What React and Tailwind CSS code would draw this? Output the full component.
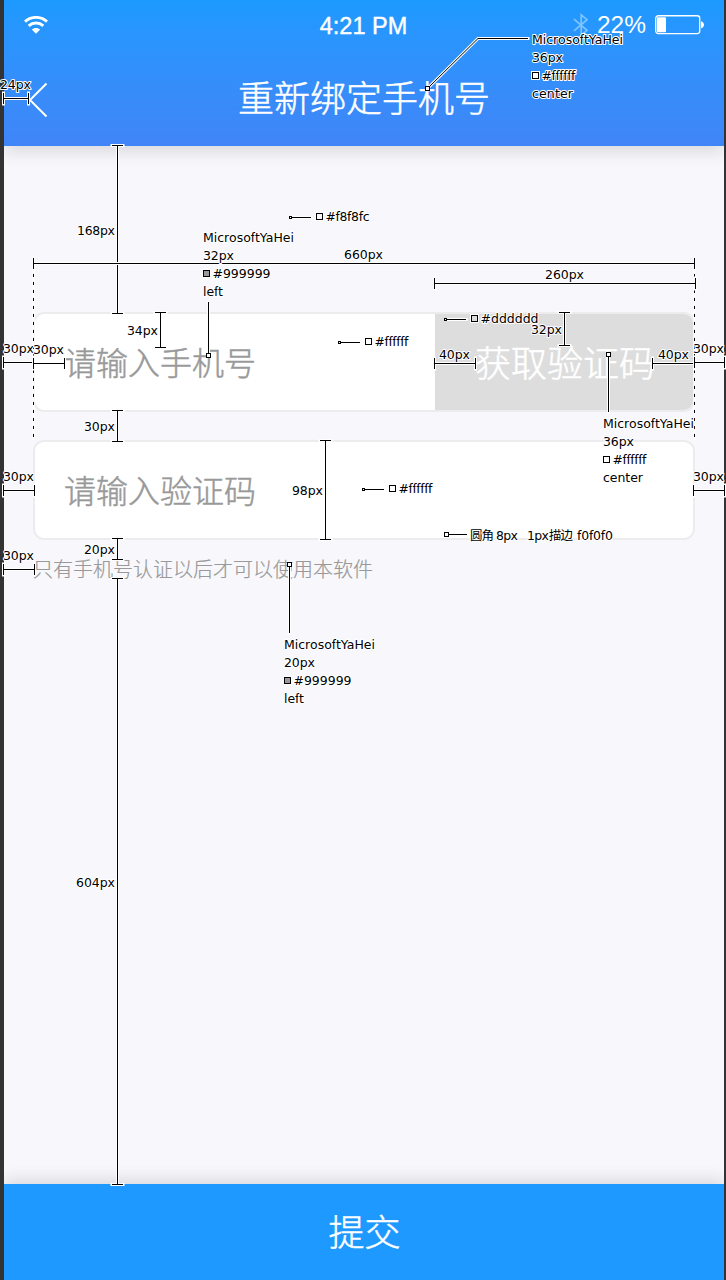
const rulers = [
  // [orientation, fixed, from, to]
  ["h", 98.5, 3.5, 28.5],
  ["v", 117.5, 145.5, 313.5],
  ["h", 263.5, 33.5, 694.5],
  ["h", 283.5, 434.5, 695.5],
  ["v", 160.5, 312.5, 347.5],
  ["h", 362.5, 3.5, 33.5],
  ["h", 363.5, 33.5, 64.5],
  ["v", 564.5, 312.5, 345.5],
  ["h", 363.5, 434.5, 475.5],
  ["h", 363.5, 652.5, 694.5],
  ["h", 362.5, 694.5, 724.5],
  ["v", 117.5, 410.5, 441.5],
  ["v", 325.5, 440.5, 539.5],
  ["h", 490.5, 3.5, 34.5],
  ["h", 490.5, 693.5, 724.5],
  ["v", 117.5, 538.5, 559.5],
  ["h", 569.5, 3.5, 34.5],
  ["v", 117.5, 578.5, 1184.5],
];

const labels = [
  // [text, x, baseline, width]
  ["24px", 0, 89, 31],
  ["168px", 77, 235, 38],
  ["660px", 344, 259, 39],
  ["260px", 545, 279, 39],
  ["34px", 127, 335, 31],
  ["30px", 3, 353, 31],
  ["30px", 33, 354, 31],
  ["32px", 531, 334, 31],
  ["40px", 439, 359, 31],
  ["40px", 658, 359, 31],
  ["30px", 693, 353, 31],
  ["30px", 84, 431, 31],
  ["98px", 292, 495, 31],
  ["30px", 3, 481, 31],
  ["30px", 693, 481, 31],
  ["20px", 84, 554, 31],
  ["30px", 3, 560, 31],
  ["604px", 76, 887, 39],
  ["#f8f8fc", 325.5, 221, 44],
  ["#ffffff", 374.5, 346, 34],
  ["#dddddd", 480.5, 323, 58],
  ["#ffffff", 398.5, 493, 34],
  ["8px", 496, 540, 22],
  ["1px", 527, 540, 22],
  ["f0f0f0", 577, 540, 36],
  ["圆角", 470, 540, 24],
  ["描边", 549, 540, 24],
];

const specs = [
  { x: 532, y: 44, size: "36px", color: "#ffffff", w: 34, align: "center", aw: 41, fill: "#fff" },
  { x: 203, y: 242, size: "32px", color: "#999999", w: 58, align: "left", aw: 20, fill: "#999999" },
  { x: 603, y: 428, size: "36px", color: "#ffffff", w: 34, align: "center", aw: 40, fill: "#fff" },
  { x: 284, y: 649, size: "20px", color: "#999999", w: 58, align: "left", aw: 20, fill: "#999999" },
];

const leaders = [
  { d: "M427.5 88.5L478 38.5H528", x: 425.5, y: 86.5, s: 4 },
  { d: "M208.5 302V355", x: 206.5, y: 353.5, s: 4 },
  { d: "M608.5 354V412", x: 606.5, y: 352.5, s: 4 },
  { d: "M289.5 564V633", x: 287.5, y: 562.5, s: 4 },
  { d: "M447 534.5H467", x: 444.5, y: 532.5, s: 4 },
  { d: "M291 217.5H311", x: 289.5, y: 216.5, s: 2 },
  { d: "M340 342.5H360", x: 338.5, y: 341.5, s: 2 },
  { d: "M446 319.5H466", x: 444.5, y: 318.5, s: 2 },
  { d: "M364 489.5H384", x: 362.5, y: 488.5, s: 2 },
];

const swatches = [
  [316.5, 213.5, "#f8f8fc"],
  [365.5, 338.5, "#ffffff"],
  [471.5, 315.5, "#dddddd"],
  [389.5, 485.5, "#ffffff"],
];

function rulerPath([dir, c, a, b]) {
  return dir === "h"
    ? `M${a} ${c}H${b}M${a} ${c - 5.5}v11M${b} ${c - 5.5}v11`
    : `M${c} ${a}V${b}M${c - 5.5} ${a}h11M${c - 5.5} ${b}h11`;
}

function Outlined({ d }) {
  return (
    <g fill="none">
      <path d={d} stroke="#fff" strokeWidth="3" strokeLinecap="square" />
      <path d={d} stroke="#000" />
    </g>
  );
}

function Note({ x, y, w, children }) {
  return (
    <text x={x} y={y} textLength={w} stroke="#fff" strokeWidth="2" strokeLinejoin="round" className="[paint-order:stroke]">
      {children}
    </text>
  );
}

function Swatch({ x, y, fill }) {
  return (
    <g>
      <rect x={x - 1} y={y - 1} width="8" height="8" fill="none" stroke="#fff" />
      <rect x={x} y={y} width="6" height="6" fill={fill} stroke="#000" />
    </g>
  );
}

function Annotations() {
  return (
    <svg
      width="726"
      height="1280"
      viewBox="0 0 726 1280"
      className="pointer-events-none absolute top-0 left-0 text-[12.5px] [font-variant-ligatures:none] [font-family:'DejaVu_Sans','Noto_Sans_CJK_SC',sans-serif]"
    >
      <path d="M33.5 266V440M694.5 266V440" stroke="#fff" strokeWidth="3" opacity="0.6" />
      <path d="M33.5 266V440M694.5 266V440" stroke="#000" strokeDasharray="3 5" />
      {rulers.map((r, i) => <Outlined key={i} d={rulerPath(r)} />)}
      {leaders.map((l, i) => (
        <g key={i}>
          <Outlined d={l.d} />
          <rect x={l.x} y={l.y} width={l.s} height={l.s} fill="#fff" stroke="#000" />
        </g>
      ))}
      {swatches.map(([x, y, f], i) => <Swatch key={i} x={x} y={y} fill={f} />)}
      {labels.map(([t, x, y, w], i) => <Note key={i} x={x} y={y} w={w}>{t}</Note>)}
      {specs.map((s, i) => (
        <g key={i}>
          <Note x={s.x} y={s.y} w={91}>MicrosoftYaHei</Note>
          <Note x={s.x} y={s.y + 18} w={31}>{s.size}</Note>
          <Swatch x={s.x + 0.5} y={s.y + 28.5} fill={s.fill} />
          <Note x={s.x + 9.5} y={s.y + 36} w={s.w}>{s.color}</Note>
          <Note x={s.x} y={s.y + 54} w={s.aw}>{s.align}</Note>
        </g>
      ))}
    </svg>
  );
}

function WifiIcon() {
  return (
    <svg width="24" height="18" viewBox="0 0 24 18" fill="none" stroke="#fff" strokeWidth="2.9">
      <path d="M1 5.6C7.2 0 16.8 0 23 5.6" />
      <path d="M4.7 9.8c4.2-3.7 10.4-3.7 14.6 0" />
      <path d="M7.8 13.600c2.5-2.2 5.9-2.2 8.4 0L12 17.800z" fill="#fff" stroke="none" />
    </svg>
  );
}

function BluetoothIcon() {
  return (
    <svg width="16" height="24" viewBox="0 0 16 24" fill="none" stroke="#7fc3ff" strokeWidth="1.7">
      <path d="M1 6.2L14 17.3 8.2 22.2V1.8L14 6.7 1 17.8" />
    </svg>
  );
}

function BatteryIcon() {
  return (
    <svg width="50" height="20" viewBox="0 0 50 20" fill="none">
      <rect x="0.75" y="0.75" width="44" height="17.8" rx="2.5" stroke="#fff" strokeWidth="1.3" />
      <rect x="2" y="2.2" width="9" height="15" rx="1" fill="#fff" />
      <path d="M46 6.2c4 1 4 6 0 7z" fill="#fff" />
    </svg>
  );
}

export default function App() {
  return (
    <div className="relative h-[1280px] w-[726px] overflow-hidden">
      <div className="flex h-full flex-col overflow-hidden border-r-2 border-l-4 border-[#333] bg-[#f8f8fc] [font-family:'Noto_Sans_CJK_SC',sans-serif]">
        <header className="flex h-[146px] shrink-0 flex-col bg-linear-to-b from-[#1c9aff] to-[#4085f7] text-white shadow-[0_6px_16px_rgba(0,0,0,0.12)]">
          <div className="grid h-[49px] grid-cols-3 items-center pr-[19px] pl-5 text-[23.5px] [font-family:'Liberation_Sans',sans-serif]">
            <WifiIcon />
            <span className="-ml-0.5 pt-1 text-center leading-none whitespace-nowrap [-webkit-text-stroke:0.4px_white]">4:21 PM</span>
            <div className="flex items-center justify-end">
              <BluetoothIcon />
              <span className="mr-[9px] ml-2 pt-0.5 text-[24.5px] leading-none">22%</span>
              <BatteryIcon />
            </div>
          </div>
          <div className="grid h-[97px] grid-cols-[48px_1fr_48px] items-center">
            <svg width="20" height="36" viewBox="0 0 20 36" fill="none" stroke="#fff" strokeWidth="2" className="mt-1 ml-6">
              <path d="M18.5 1.5L2 18l16.500 16.500" />
            </svg>
            <h1 className="pb-1 text-center text-[36px] leading-[36px] font-light [-webkit-text-stroke:0.5px_white]">重新绑定手机号</h1>
          </div>
        </header>

        <main className="flex flex-1 flex-col px-[29px] pt-[166px] font-light">
          <div className="flex h-[100px] w-[662px] overflow-hidden rounded-[11px] border-2 border-[#ececef] bg-white">
            <div className="flex flex-1 items-center pb-[3px] pl-[29px] text-[32px] leading-none text-[#999] [-webkit-text-stroke:0.5px_#999]">请输入手机号</div>
            <button className="w-[258px] pb-[3px] pl-0.5 bg-[#ddd] text-[36px] leading-none text-white [-webkit-text-stroke:0.5px_white]">获取验证码</button>
          </div>
          <div className="mt-7 flex h-[100px] w-[662px] items-center rounded-[11px] border-2 border-[#ececef] bg-white pb-[3px] pl-[29px] text-[32px] leading-none text-[#999] [-webkit-text-stroke:0.5px_#999]">
            请输入验证码
          </div>
          <p className="mt-[19px] text-[20px] leading-5 text-[#999] [-webkit-text-stroke:0.2px_#999]">只有手机号认证以后才可以使用本软件</p>
        </main>

        <button className="h-24 shrink-0 bg-[#1e99ff] pb-1 pl-px text-[36px] leading-none font-light text-white shadow-[0_-5px_15px_rgba(0,0,0,0.12)] [-webkit-text-stroke:0.5px_white]">
          提交
        </button>
      </div>
      <Annotations />
    </div>
  );
}
